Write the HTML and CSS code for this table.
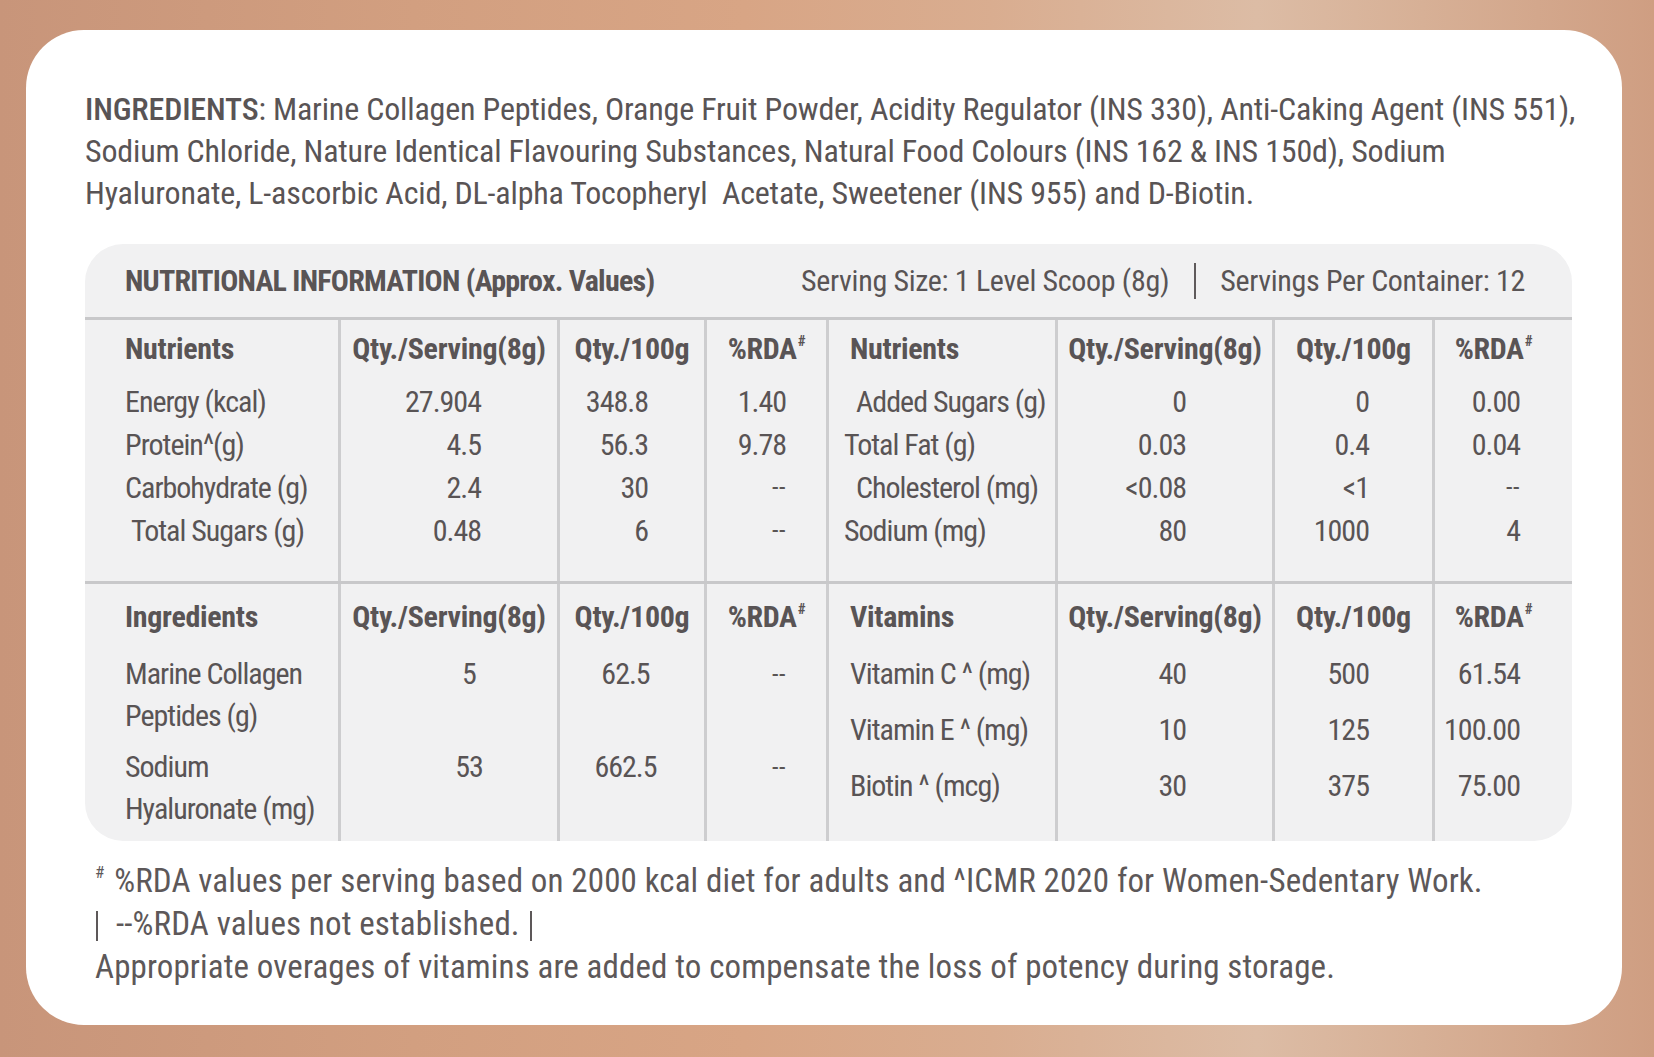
FILE: index.html
```html
<!DOCTYPE html>
<html lang="en">
<head>
<meta charset="utf-8">
<title>Nutritional Information</title>
<link rel="stylesheet" href="styles.css">
</head>
<body>
<div class="card">
  <p class="ingredients"><span class="lbl">INGREDIENTS</span>: Marine Collagen Peptides, Orange Fruit Powder, Acidity Regulator (INS 330), Anti-Caking Agent (INS 551),<br>Sodium Chloride, Nature Identical Flavouring Substances, Natural Food Colours (INS 162 &amp; INS 150d), Sodium<br>Hyaluronate, L-ascorbic Acid, DL-alpha Tocopheryl&nbsp; Acetate, Sweetener (INS 955) and D-Biotin.</p>

  <div class="panel">
    <div class="panel-head">
      <span class="title">NUTRITIONAL INFORMATION (Approx. Values)</span>
      <span class="serving">Serving Size: 1 Level Scoop (8g)<i class="vbar"></i>Servings Per Container: 12</span>
    </div>

    <div class="sec sec1">
      <div class="col c1">
        <div class="h">Nutrients</div>
        <div class="r">Energy (kcal)</div>
        <div class="r">Protein^(g)</div>
        <div class="r">Carbohydrate (g)</div>
        <div class="r ind">Total Sugars (g)</div>
      </div>
      <div class="col c2">
        <div class="h">Qty./Serving(8g)</div>
        <div class="r">27.904</div>
        <div class="r">4.5</div>
        <div class="r">2.4</div>
        <div class="r">0.48</div>
      </div>
      <div class="col c3">
        <div class="h">Qty./100g</div>
        <div class="r">348.8</div>
        <div class="r">56.3</div>
        <div class="r">30</div>
        <div class="r">6</div>
      </div>
      <div class="col c4">
        <div class="h">%RDA<sup>#</sup></div>
        <div class="r">1.40</div>
        <div class="r">9.78</div>
        <div class="r dash">--</div>
        <div class="r dash">--</div>
      </div>
      <div class="col c5">
        <div class="h hi">Nutrients</div>
        <div class="r ind2">Added Sugars (g)</div>
        <div class="r">Total Fat (g)</div>
        <div class="r ind2">Cholesterol (mg)</div>
        <div class="r">Sodium (mg)</div>
      </div>
      <div class="col c6">
        <div class="h">Qty./Serving(8g)</div>
        <div class="r">0</div>
        <div class="r">0.03</div>
        <div class="r">&lt;0.08</div>
        <div class="r">80</div>
      </div>
      <div class="col c7">
        <div class="h">Qty./100g</div>
        <div class="r">0</div>
        <div class="r">0.4</div>
        <div class="r">&lt;1</div>
        <div class="r">1000</div>
      </div>
      <div class="col c8">
        <div class="h">%RDA<sup>#</sup></div>
        <div class="r">0.00</div>
        <div class="r">0.04</div>
        <div class="r dash">--</div>
        <div class="r">4</div>
      </div>
    </div>

    <div class="sec sec2">
      <div class="col c1">
        <div class="h">Ingredients</div>
        <div class="item">Marine Collagen<br>Peptides (g)</div>
        <div class="item">Sodium<br>Hyaluronate (mg)</div>
      </div>
      <div class="col c2 mid">
        <div class="h">Qty./Serving(8g)</div>
        <div class="item">5</div>
        <div class="item">53</div>
      </div>
      <div class="col c3 mid">
        <div class="h">Qty./100g</div>
        <div class="item">62.5</div>
        <div class="item">662.5</div>
      </div>
      <div class="col c4">
        <div class="h">%RDA<sup>#</sup></div>
        <div class="item dash">--</div>
        <div class="item dash">--</div>
      </div>
      <div class="col c5">
        <div class="h hi">Vitamins</div>
        <div class="vit hi">Vitamin C ^ (mg)</div>
        <div class="vit hi">Vitamin E ^ (mg)</div>
        <div class="vit hi">Biotin ^ (mcg)</div>
      </div>
      <div class="col c6">
        <div class="h">Qty./Serving(8g)</div>
        <div class="vit">40</div>
        <div class="vit">10</div>
        <div class="vit">30</div>
      </div>
      <div class="col c7">
        <div class="h">Qty./100g</div>
        <div class="vit">500</div>
        <div class="vit">125</div>
        <div class="vit">375</div>
      </div>
      <div class="col c8">
        <div class="h">%RDA<sup>#</sup></div>
        <div class="vit">61.54</div>
        <div class="vit">100.00</div>
        <div class="vit">75.00</div>
      </div>
    </div>
  </div>

  <div class="foot">
    <p><sup>#</sup> %RDA values per serving based on 2000 kcal diet for adults and ^ICMR 2020 for Women-Sedentary Work.</p>
    <p><i class="fbar fbar-l"></i>--%RDA values not established.<i class="fbar fbar-r"></i></p>
    <p>Appropriate overages of vitamins are added to compensate the loss of potency during storage.</p>
  </div>
</div>
</body>
</html>
```
FILE: styles.css
```css
html, body {
  margin: 0;
  padding: 0;
}

body {
  width: 1654px;
  height: 1057px;
  box-sizing: border-box;
  padding: 30px 32px 32px 26px;
  background: linear-gradient(90deg, #c8957a 0%, #d29f80 25%, #d8a585 45%, #d9ad90 60%, #dcbca5 76%, #d7b096 86%, #cf9e82 100%);
  font-family: Roboto, "Liberation Sans", sans-serif;
  font-stretch: 75%;
  color: #595455;
}

.card {
  height: 995px;
  box-sizing: border-box;
  background: #ffffff;
  border-radius: 58px;
  padding: 58px 50px 0 59px;
}

.ingredients {
  margin: 0;
  font-size: 32px;
  line-height: 42px;
  white-space: nowrap;
  font-weight: 400;
  letter-spacing: -0.17px;
}

.ingredients .lbl {
  font-weight: 500;
}

.panel {
  margin-top: 30px;
  background: #f1f1f2;
  border-radius: 38px;
  overflow: hidden;
  font-size: 30px;
}

.panel-head {
  height: 73px;
  display: flex;
  align-items: center;
  justify-content: space-between;
  padding: 0 47px 0 40px;
}

.title {
  font-weight: 700;
  letter-spacing: -0.75px;
}

.serving {
  display: flex;
  align-items: center;
  letter-spacing: -0.32px;
}

.vbar {
  display: inline-block;
  width: 2px;
  height: 36px;
  background: #5f5a5b;
  margin: 0 24px 0 25px;
}

.sec {
  display: flex;
  border-top: 3px solid #c8c8ca;
  box-sizing: border-box;
}

.sec1 { height: 264px; }
.sec2 { height: 260px; }

.col {
  box-sizing: border-box;
  border-left: 3px solid #cdcdcf;
  text-align: right;
  white-space: nowrap;
  letter-spacing: -1px;
}

.sec1 .col { padding-top: 8px; }
.sec2 .col { padding-top: 12px; }

.c1 { width: 253px; border-left: none; text-align: left; padding-left: 40px; }
.c2 { width: 219px; padding-right: 76px; }
.c3 { width: 147px; padding-right: 56px; }
.c4 { width: 122px; padding-right: 40px; }
.c5 { width: 229px; text-align: left; padding-left: 15px; }
.c6 { width: 217px; padding-right: 86px; }
.c7 { width: 160px; padding-right: 63px; }
.c8 { width: 140px; padding-right: 52px; }

.h {
  line-height: 42px;
  font-weight: 700;
  letter-spacing: -0.3px;
  text-align: center;
}

.c1 .h, .c5 .h { text-align: left; }

.c2 .h { margin-right: -76px; }
.c6 .h { margin-right: -86px; }
.c3 .h { margin-right: -56px; }
.c7 .h { margin-right: -63px; }
.c4 .h { margin-right: -40px; }
.c8 .h { margin-right: -52px; margin-left: -20px; }

.h sup {
  font-size: 15px;
  vertical-align: 13px;
  line-height: 0;
  margin-left: 1px;
}

.sec1 .h { margin-bottom: 10px; }
.sec2 .h { margin-bottom: 15px; }

.r {
  line-height: 43px;
}

.dash {
  letter-spacing: 0.5px;
  font-size: 26px;
}

.ind { padding-left: 6px; }
.ind2 { padding-left: 12px; }
.hi { padding-left: 6px; }

.item {
  line-height: 42px;
  height: 84px;
}

.item + .item { margin-top: 9px; }

.mid { text-align: center; }
.c2.mid { padding-right: 0; padding-left: 40px; }
.c2.mid .h { margin-right: 0; margin-left: -40px; }
.c3.mid { padding-right: 13px; }
.c3.mid .h { margin-right: -13px; }

.vit {
  line-height: 42px;
  height: 56px;
}

.foot {
  padding: 18px 0 0 10px;
  font-size: 33px;
  line-height: 43px;
  letter-spacing: 0.12px;
  color: #5d5859;
}

.foot p {
  margin: 0;
  white-space: nowrap;
}

.foot sup {
  font-size: 17px;
  vertical-align: 14px;
  line-height: 0;
  margin-right: 2px;
}

.fbar {
  display: inline-block;
  width: 2px;
  height: 30px;
  background: #5d5859;
  vertical-align: -6px;
}

.fbar-l { margin: 0 18px 0 1px; }
.fbar-r { margin-left: 10px; }
```
